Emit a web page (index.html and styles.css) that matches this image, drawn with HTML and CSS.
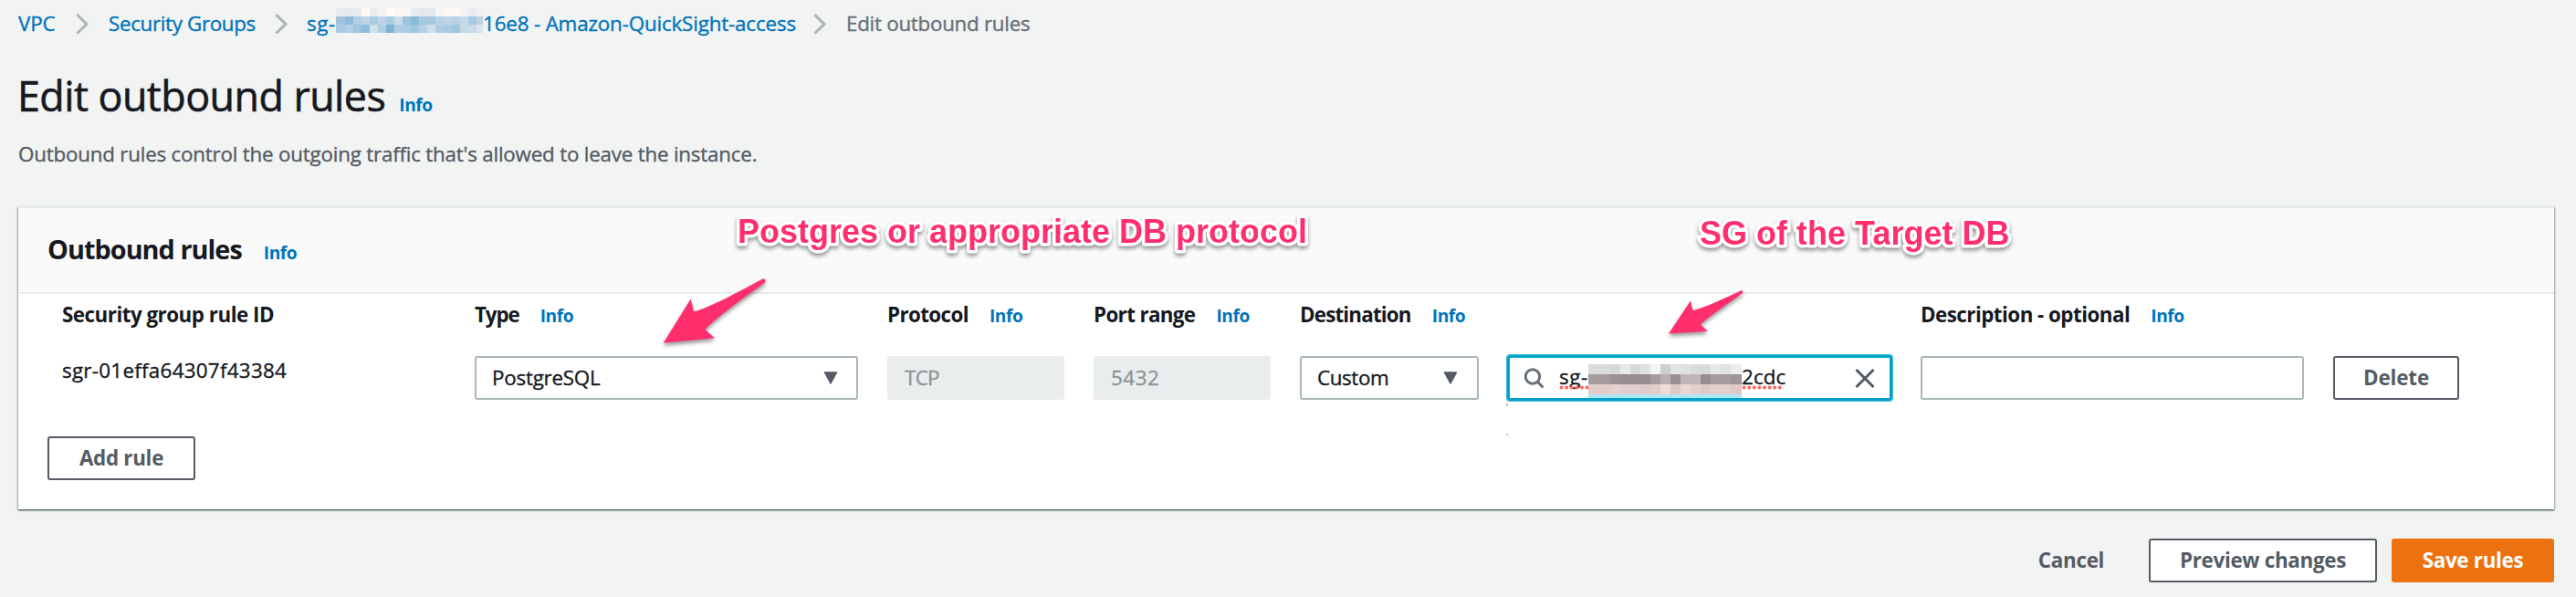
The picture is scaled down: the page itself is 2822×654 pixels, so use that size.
FILE: index.html
```
<!DOCTYPE html>
<html lang="en">
<head>
<meta charset="utf-8">
<title>Edit outbound rules</title>
<link rel="stylesheet" href="styles.css">
</head>
<body>
<nav class="crumbs">
  <a class="link c-vpc">VPC</a>
  <svg class="chev" viewBox="0 0 14 23"><path d="M1.5 1.2 12 11.3 1.5 21.5"/></svg>
  <a class="link c-groups">Security Groups</a>
  <svg class="chev" viewBox="0 0 14 23"><path d="M1.5 1.2 12 11.3 1.5 21.5"/></svg>
  <a class="link c-sg"><span class="c-pre">sg-</span><svg class="mask-a" viewBox="0 0 161 27" shape-rendering="crispEdges">
    <g>
      <rect width="11" height="9" fill="#e8ecf0"/><rect x="10" width="9" height="9" fill="#e3e8ee"/><rect x="19" width="9" height="9" fill="#e6ebef"/><rect x="28" width="9" height="9" fill="#fdfaf5"/><rect x="37" width="9" height="9" fill="#e8ecf0"/><rect x="46" width="9" height="9" fill="#f2f3f3"/><rect x="55" width="9" height="9" fill="#fffaf3"/><rect x="64" width="19" height="9" fill="#f9f6f4"/><rect x="82" width="9" height="9" fill="#e8ebef"/><rect x="91" width="19" height="9" fill="#e3e8ed"/><rect x="109" width="9" height="9" fill="#f9f5f3"/><rect x="118" width="18" height="9" fill="#fcf8f4"/><rect x="136" width="9" height="9" fill="#f4f3f3"/><rect x="145" width="9" height="9" fill="#e8ebef"/><rect x="154" width="7" height="9" fill="#f0f1f2"/>
    </g>
    <g transform="translate(0 9)">
      <rect width="10" height="9" fill="#a0c4df"/><rect x="10" width="9" height="9" fill="#8fbcdc"/><rect x="19" width="9" height="9" fill="#b3d0e4"/><rect x="28" width="9" height="9" fill="#bcd4e6"/><rect x="37" width="9" height="9" fill="#a9cce2"/><rect x="46" width="9" height="9" fill="#bcd4e6"/><rect x="55" width="9" height="9" fill="#abcce2"/><rect x="64" width="9" height="9" fill="#c8dce9"/><rect x="73" width="9" height="9" fill="#9dc4de"/><rect x="82" width="9" height="9" fill="#8ab9d9"/><rect x="91" width="18" height="9" fill="#a5c9e0"/><rect x="109" width="9" height="9" fill="#bbd3e6"/><rect x="118" width="9" height="9" fill="#bfd5e6"/><rect x="127" width="9" height="9" fill="#bad3e6"/><rect x="136" width="9" height="9" fill="#c4d9e8"/><rect x="145" width="9" height="9" fill="#a7cae1"/><rect x="154" width="7" height="9" fill="#bcd3e6"/>
    </g>
    <g transform="translate(0 18)">
      <rect width="10" height="9" fill="#a9cbe1"/><rect x="10" width="9" height="9" fill="#b4d1e3"/><rect x="19" width="9" height="9" fill="#a0c5df"/><rect x="28" width="9" height="9" fill="#8fbddb"/><rect x="37" width="9" height="9" fill="#cfe0ea"/><rect x="46" width="9" height="9" fill="#b0cfe3"/><rect x="55" width="9" height="9" fill="#80b3d5"/><rect x="64" width="9" height="9" fill="#aecde2"/><rect x="73" width="9" height="9" fill="#abcce2"/><rect x="82" width="9" height="9" fill="#a0c5df"/><rect x="91" width="9" height="9" fill="#b4d1e4"/><rect x="100" width="9" height="9" fill="#cfdfe9"/><rect x="109" width="9" height="9" fill="#afcee3"/><rect x="118" width="9" height="9" fill="#a9cbe2"/><rect x="127" width="9" height="9" fill="#a0c5df"/><rect x="136" width="9" height="9" fill="#c4d9e8"/><rect x="145" width="9" height="9" fill="#c9dbe8"/><rect x="154" width="7" height="9" fill="#dbe5ed"/>
    </g>
  </svg><span class="c-name">16e8 - Amazon-QuickSight-access</span></a>
  <svg class="chev" viewBox="0 0 14 23"><path d="M1.5 1.2 12 11.3 1.5 21.5"/></svg>
  <span class="c-here">Edit outbound rules</span>
</nav>

<header class="page-head">
  <h1>Edit outbound rules</h1><a class="info">Info</a>
</header>
<p class="lead">Outbound rules control the outgoing traffic that's allowed to leave the instance.</p>

<section class="card">
  <div class="card-head"><h2>Outbound rules</h2><a class="info">Info</a></div>
  <div class="rules">
    <div class="th"><b class="t-id">Security group rule ID</b></div>
    <div class="th"><b class="t-type">Type</b><a class="info">Info</a></div>
    <div class="th"><b class="t-proto">Protocol</b><a class="info">Info</a></div>
    <div class="th"><b class="t-port">Port range</b><a class="info">Info</a></div>
    <div class="th span2"><b class="t-dest">Destination</b><a class="info">Info</a></div>
    <div class="th span2"><b class="t-desc">Description - optional</b><a class="info">Info</a></div>

    <div class="rule-id">sgr-01effa64307f43384</div>
    <div class="field select w-lg"><span class="v-type">PostgreSQL</span><svg class="tri" viewBox="0 0 16 14"><path d="M1.5 1h13L8 13z"/></svg></div>
    <div class="field disabled"><span class="v-tcp">TCP</span></div>
    <div class="field disabled"><span class="v-num">5432</span></div>
    <div class="field select w-sm"><span class="v-custom">Custom</span><svg class="tri" viewBox="0 0 16 14"><path d="M1.5 1h13L8 13z"/></svg></div>
    <div class="search">
      <svg class="glass" viewBox="0 0 22 23"><circle cx="9" cy="9.5" r="7.7"/><path d="m14 15 6.5 6.5"/></svg>
      <span class="s-pre">sg-</span><svg class="mask-b" viewBox="0 0 168 37" shape-rendering="crispEdges">
        <g>
          <rect width="24" height="11" fill="#dadbdb"/><rect x="24" width="11" height="11" fill="#d8d8d8"/><rect x="35" width="11" height="11" fill="#e8e8e8"/><rect x="46" width="11" height="11" fill="#d7d9d9"/><rect x="57" width="11" height="11" fill="#e1e1e1"/><rect x="68" width="11" height="11" fill="#f3f5f5"/><rect x="79" width="11" height="11" fill="#cfcfcf"/><rect x="90" width="11" height="11" fill="#e2e5e4"/><rect x="101" width="11" height="11" fill="#dfe1e0"/><rect x="112" width="11" height="11" fill="#dadcdb"/><rect x="123" width="11" height="11" fill="#d8dad9"/><rect x="134" width="11" height="11" fill="#e8eae9"/><rect x="145" width="11" height="11" fill="#e2e2e2"/><rect x="156" width="12" height="11" fill="#ebeeed"/>
        </g>
        <g transform="translate(0 11)">
          <rect width="24" height="11" fill="#a69c9e"/><rect x="24" width="11" height="11" fill="#9e9193"/><rect x="35" width="33" height="11" fill="#988c90"/><rect x="68" width="11" height="11" fill="#a69c9e"/><rect x="79" width="11" height="11" fill="#b8b0b2"/><rect x="90" width="11" height="11" fill="#9a8e90"/><rect x="101" width="22" height="11" fill="#c0b6b8"/><rect x="123" width="11" height="11" fill="#998c8e"/><rect x="134" width="22" height="11" fill="#a69b9f"/><rect x="156" width="12" height="11" fill="#9e9598"/>
        </g>
        <g transform="translate(0 22)">
          <rect width="24" height="11" fill="#e2cdcc"/><rect x="24" width="11" height="11" fill="#e8d0cf"/><rect x="35" width="22" height="11" fill="#e0cfce"/><rect x="57" width="11" height="11" fill="#dfcac9"/><rect x="68" width="11" height="11" fill="#e3cdcc"/><rect x="79" width="11" height="11" fill="#efdbd9"/><rect x="90" width="11" height="11" fill="#dfc9c8"/><rect x="101" width="11" height="11" fill="#ebd6d5"/><rect x="112" width="11" height="11" fill="#e3cfce"/><rect x="123" width="11" height="11" fill="#dec9c8"/><rect x="134" width="22" height="11" fill="#e2cecd"/><rect x="156" width="12" height="11" fill="#dfc8c7"/>
        </g>
        <rect y="33" width="168" height="4" fill="#b0e7f4"/>
      </svg><span class="s-post">2cdc</span>
      <svg class="clear" viewBox="0 0 22 21"><path d="m1.5 1 19 19M20.5 1l-19 19"/></svg>
      <svg class="squiggle" viewBox="0 0 246 5"><path d="M2.5 2.5H32"/><path d="M202.500 2.500H245"/></svg>
      <span class="tick tick-1"></span><span class="tick tick-2"></span>
    </div>
    <div class="field w-lg"></div>
    <button class="btn b-delete">Delete</button>
  </div>
  <button class="btn b-add">Add rule</button>

  <svg class="notes" viewBox="0 0 2778 330">
    <g class="arrow">
      <path d="M706.700 149.700 736.700 101.500 740 115.200C757 111.500 792 92 816 79.200Q819 79.500 818.500 83C794 101 762 124 752.500 135L763 144.500Z"/>
      <path d="M1808 139.500 1832 103.500 1834.300 114.200C1849 110.500 1871 100 1887.500 92.300Q1890.500 92.500 1888.500 95.500C1871 108 1849 123 1843 129.500L1851 137Z"/>
    </g>
    <g class="note">
      <text x="788" y="40" textLength="624">Postgres or appropriate DB protocol</text>
      <text x="1842" y="41.500" textLength="339.500">SG of the Target DB</text>
    </g>
  </svg>
</section>

<footer class="actions">
  <button class="btn plain b-cancel">Cancel</button>
  <button class="btn b-preview">Preview changes</button>
  <button class="btn primary b-save">Save rules</button>
</footer>
</body>
</html>
```
FILE: styles.css
```
* { box-sizing: border-box; }
body {
  margin: 0;
  height: 654px;
  overflow: hidden;
  background: #f2f3f3;
  color: #16191f;
  font: 400 22.4px/32px "Open Sans", "Noto Sans", sans-serif;
}
svg { display: block; flex: none; }
h1, h2, p { margin: 0; }

/* Slightly sturdier regular weight */
.crumbs, h1, .lead, .rule-id, .field, .search { -webkit-text-stroke: .35px currentColor; }

/* Breadcrumb */
.crumbs { display: flex; align-items: flex-start; height: 41px; padding: 9px 0 0 20px; white-space: nowrap; }
.link, .info { color: #0073bb; }
.c-vpc { width: 63px; letter-spacing: -.16px; }
.c-groups { width: 182px; letter-spacing: -.35px; }
.c-vpc + .chev { margin-right: 22px; }
.chev { width: 14px; height: 23px; margin-top: 6px; fill: none; stroke: #aab7b8; stroke-width: 3; }
.c-sg { display: flex; margin-left: 21px; }
.c-pre { width: 32px; letter-spacing: .6px; }
.c-name { width: 362px; letter-spacing: -.17px; }
.c-vpc, .c-groups, .c-pre, .c-name, .c-here { padding-top: 1px; }
.mask-a { width: 161px; height: 27px; }
.c-here { margin-left: 22px; color: #687078; letter-spacing: -.28px; }

/* Page heading */
.page-head { display: flex; align-items: baseline; gap: 15px; padding: 36px 0 0 19px; height: 112px; }
h1 { font-size: 44.8px; line-height: 56px; font-weight: 400; letter-spacing: -.54px; -webkit-text-stroke-width: .6px; }
.info { font-size: 19.2px; font-weight: 700; letter-spacing: -.46px; }
.lead { padding-left: 20px; color: #545b64; letter-spacing: -.22px; }

/* Card */
.card {
  position: relative;
  width: 2778px;
  height: 332px;
  margin: 41px 0 0 20px;
  background: #fff;
  border-top: 2px solid #eaeded;
  box-shadow: 0 1px 1px 0 rgba(0,28,36,.5), 1px 1px 2px 0 rgba(0,28,36,.3), -1px 1px 2px 0 rgba(0,28,36,.3);
}
.card-head {
  display: flex;
  align-items: baseline;
  gap: 24px;
  height: 94px;
  padding: 25px 32px 0;
  background: #fafafa;
  border-bottom: 2px solid #eaeded;
}
h2 { font-size: 28.8px; line-height: 40px; font-weight: 700; letter-spacing: -.95px; }

.rules {
  display: grid;
  grid-template-columns: 452px 452px 226px 226px 226px 454px 452px 140px;
  grid-template-rows: 61px 48px;
  margin: 7px 0 0 48px;
}
.th { display: flex; align-items: baseline; gap: 23px; white-space: nowrap; }
.span2 { grid-column: span 2; }
.t-id { letter-spacing: -.51px; }
.t-type { letter-spacing: -1.1px; }
.t-proto { letter-spacing: -.62px; }
.t-port { letter-spacing: -.65px; }
.t-dest { letter-spacing: -.83px; }
.t-desc { letter-spacing: -.54px; }
.rule-id { letter-spacing: .27px; }

.field {
  display: flex;
  align-items: center;
  justify-content: space-between;
  width: 194px;
  height: 48px;
  padding: 0 20px 0 17px;
  background: #fff;
  border: 2px solid #aab7b8;
  border-radius: 3px;
}
.w-lg { width: 420px; }
.w-sm { width: 196px; padding-right: 21px; }
.disabled { background: #eaeded; border-color: #eaeded; color: #879596; }
.tri { width: 16px; height: 14px; fill: #545b64; stroke: #545b64; stroke-width: 1.5; stroke-linejoin: round; }
.v-type { letter-spacing: -.24px; }
.v-tcp { letter-spacing: -.7px; }
.v-num { letter-spacing: .53px; }
.v-custom { letter-spacing: -.39px; }

.search {
  position: relative;
  display: flex;
  align-items: flex-start;
  width: 422px;
  height: 50px;
  margin: -1px 0 0 1px;
  padding: 5px 16px 0 16px;
  border: 3px solid #00a1c9;
  border-radius: 3px;
  box-shadow: 0 0 0 1px rgba(0,161,201,.7);
}
.glass { width: 22px; height: 23px; margin-top: 6px; fill: none; stroke: #687078; stroke-width: 3; }
.s-pre { width: 32px; margin-left: 16px; letter-spacing: .6px; }
.mask-b { width: 168px; height: 37px; margin-top: 2px; }
.s-post { letter-spacing: .1px; }
.clear { width: 22px; height: 21px; margin: 7px 0 0 auto; fill: none; stroke: #545b64; stroke-width: 3; }
.squiggle { position: absolute; left: 54px; top: 30px; width: 246px; height: 5px; fill: none; stroke: #ff6a60; stroke-width: 4; stroke-linecap: round; stroke-dasharray: .1 5.500; }
.tick { position: absolute; left: -4px; width: 2px; height: 3px; background: #c4c4c4; }
.tick-1 { top: 50px; }
.tick-2 { top: 83px; height: 2px; }

/* Buttons */
.btn {
  height: 48px;
  padding: 0;
  background: #fff;
  border: 2px solid #545b64;
  border-radius: 3px;
  color: #545b64;
  font: 700 22.4px/32px "Open Sans", "Noto Sans", sans-serif;
  letter-spacing: -.3px;
}
.b-delete { width: 138px; letter-spacing: -.12px; }
.b-add { display: block; width: 162px; margin: 40px 0 0 32px; }
.actions { display: flex; justify-content: flex-end; padding: 32px 24px 0 0; }
.plain { background: transparent; border-color: transparent; }
.b-cancel { width: 136px; margin-right: 17px; }
.b-preview { width: 250px; margin-right: 16px; }
.primary { background: #ec7211; border-color: #ec7211; color: #fff; }
.b-save { width: 178px; }

/* Callouts laid over the card */
.notes { position: absolute; left: 0; top: -2px; width: 2778px; height: 330px; overflow: visible; pointer-events: none; }
.arrow { fill: #ff2f6e; filter: drop-shadow(0 3px 2px rgba(0,0,0,.4)); }
.note {
  font: 700 36px "Liberation Sans", Arial, sans-serif;
  fill: #ff2f6e;
  stroke: #fff;
  stroke-width: 7px;
  stroke-linejoin: round;
  paint-order: stroke;
  filter: drop-shadow(0 3px 2px rgba(0,0,0,.4));
}
```
